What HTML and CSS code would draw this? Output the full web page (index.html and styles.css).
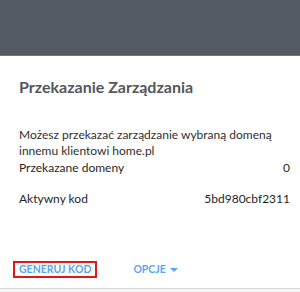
FILE: index.html
```html
<!DOCTYPE html>
<html lang="pl">
<head>
    <meta charset="UTF-8">
    <meta name="viewport" content="width=device-width, initial-scale=1.0">
    <title>Przekazanie Zarządzania</title>
    <link rel="stylesheet" href="styles.css">
</head>
<body>
    <div class="topbar"></div>
    <div class="panel">
        <h1>Przekazanie Zarządzania</h1>
        <p class="desc">Możesz przekazać zarządzanie wybraną domeną innemu klientowi home.pl</p>
        <div class="row">
            <span class="label">Przekazane domeny</span>
            <span class="value">0</span>
        </div>
        <div class="row row-code">
            <span class="label">Aktywny kod</span>
            <span class="value">5bd980cbf2311</span>
        </div>
        <div class="actions">
            <button class="btn btn-active">GENERUJ KOD</button>
            <button class="btn">OPCJE <span class="caret"></span></button>
        </div>
    </div>
    <div class="footer-line"></div>
</body>
</html>
```

FILE: styles.css
```css
body {
    font-family: Lato, "Open Sans", sans-serif;
    background-color: #fff;
    margin: 0;
    padding: 0;
}
.topbar {
    height: 55px;
    background-color: #535a64;
    border-bottom: 1px solid #70767e;
}
.panel {
    padding: 21px 10px 0 19px;
}
h1 {
    font-size: 16px;
    font-weight: 700;
    color: #53575d;
    line-height: 20px;
    margin: 0;
}
.desc {
    font-size: 12px;
    line-height: 16px;
    color: #2f2f2f;
    margin: 30px 0 0;
    max-width: 262px;
}
.row {
    display: flex;
    justify-content: space-between;
    font-size: 12px;
    line-height: 17px;
    color: #1f1f1f;
}
.row-code {
    margin-top: 14px;
}
.actions {
    display: flex;
    align-items: center;
    gap: 30px;
    margin: 54px 0 0 -6px;
}
.btn {
    font-family: Lato, "Open Sans", sans-serif;
    font-size: 10.5px;
    font-weight: 700;
    color: #5aa5f2;
    background: none;
    border: 2px solid transparent;
    padding: 0 4px;
    height: 17px;
    line-height: 13px;
    cursor: pointer;
}
.btn-active {
    border-color: #e8141c;
}
.caret {
    display: inline-block;
    width: 0;
    height: 0;
    border-left: 4px solid transparent;
    border-right: 4px solid transparent;
    border-top: 4px solid #5aa5f2;
    vertical-align: middle;
    margin-left: 2px;
}
.footer-line {
    margin-top: 10px;
    border-top: 1px solid #d6d6d6;
    height: 10px;
    background-color: #f4f4f4;
}
```
